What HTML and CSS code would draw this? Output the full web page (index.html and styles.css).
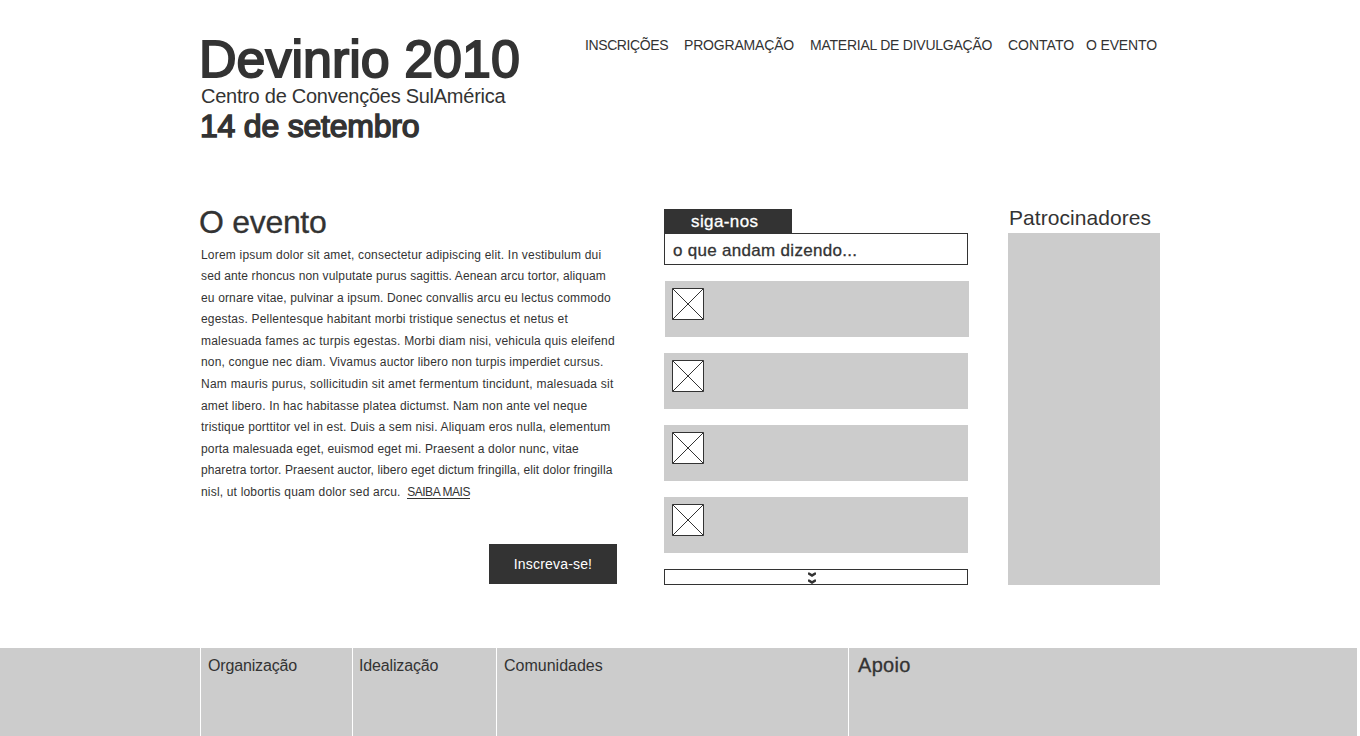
FILE: index.html
```html
<!DOCTYPE html>
<html lang="pt-BR">
<head>
<meta charset="utf-8">
<title>Devinrio 2010</title>
<link rel="stylesheet" href="styles.css">
</head>
<body>
<div class="page">
  <header class="header">
    <div class="brand">
      <h1 class="title">Devinrio 2010</h1>
      <p class="place">Centro de Convenções SulAmérica</p>
      <p class="date">14 de setembro</p>
    </div>
    <nav class="nav">
      <a class="n1">INSCRIÇÕES</a><a class="n2">PROGRAMAÇÃO</a><a class="n3">MATERIAL DE DIVULGAÇÃO</a><a class="n4">CONTATO</a><a class="n5">O EVENTO</a>
    </nav>
  </header>
  <main class="main">
    <section class="event">
      <h2 class="event-title">O evento</h2>
      <p class="event-text"><span class="loose">Lorem ipsum dolor sit amet, consectetur adipiscing elit. In vestibulum dui</span><br><span class="tight">sed ante rhoncus non vulputate purus sagittis. Aenean arcu tortor, aliquam</span><br><span class="snug">eu ornare vitae, pulvinar a ipsum. Donec convallis arcu eu lectus commodo</span><br><span class="loose">egestas. Pellentesque habitant morbi tristique senectus et netus et</span><br><span class="wide">malesuada fames ac turpis egestas. Morbi diam nisi, vehicula quis eleifend</span><br><span class="normal">non, congue nec diam. Vivamus auctor libero non turpis imperdiet cursus.</span><br><span class="wider">Nam mauris purus, sollicitudin sit amet fermentum tincidunt, malesuada sit</span><br><span class="normal">amet libero. In hac habitasse platea dictumst. Nam non ante vel neque</span><br><span class="medium">tristique porttitor vel in est. Duis a sem nisi. Aliquam eros nulla, elementum</span><br><span class="normal">porta malesuada eget, euismod eget mi. Praesent a dolor nunc, vitae</span><br><span class="tightest">pharetra tortor. Praesent auctor, libero eget dictum fringilla, elit dolor fringilla</span><br><span class="medium">nisl, ut lobortis quam dolor sed arcu. </span><a class="more">SAIBA MAIS</a></p>
      <a class="button">Inscreva-se!</a>
    </section>
    <section class="social">
      <h2 class="tab">siga-nos</h2>
      <div class="saying">o que andam dizendo...</div>
      <ul class="posts">
        <li class="post post-first"><svg class="avatar" viewBox="0 0 32 32"><path d="M.5.5h31v31H.5zM.5.5l31 31M31.5.5l-31 31"/></svg></li>
        <li class="post"><svg class="avatar" viewBox="0 0 32 32"><path d="M.5.5h31v31H.5zM.5.5l31 31M31.5.5l-31 31"/></svg></li>
        <li class="post"><svg class="avatar" viewBox="0 0 32 32"><path d="M.5.5h31v31H.5zM.5.5l31 31M31.5.5l-31 31"/></svg></li>
        <li class="post"><svg class="avatar" viewBox="0 0 32 32"><path d="M.5.5h31v31H.5zM.5.5l31 31M31.5.5l-31 31"/></svg></li>
      </ul>
      <div class="expand"><svg class="chevrons" viewBox="0 0 8 12"><path d="M0 .5h1.500L4 2l2.500-1.500H8V2.500L4 5 0 2.500zM0 7.500h1.500L4 9l2.500-1.500H8V9.500L4 12 0 9.500z"/></svg></div>
    </section>
    <aside class="sponsors">
      <h2 class="sponsors-title">Patrocinadores</h2>
      <div class="sponsors-box"></div>
    </aside>
  </main>
  <footer class="footer">
    <div class="col col-org">Organização</div>
    <div class="col col-idea">Idealização</div>
    <div class="col">Comunidades</div>
    <div class="col support">Apoio</div>
  </footer>
</div>
</body>
</html>
```
FILE: styles.css
```css
* { box-sizing: border-box; }
body {
  margin: 0;
  background: #fff;
  color: #333;
  font-family: "Liberation Sans", Arial, sans-serif;
  overflow: hidden;
}
h1, h2, p, ul { margin: 0; padding: 0; font-weight: 400; list-style: none; }
.page { width: 1360px; height: 736px; display: flex; flex-direction: column; }
.header { height: 209px; padding: 30px 0 0 199px; display: flex; }
.brand { width: 386px; padding-top: 6px; }
.title { font-size: 52px; line-height: 46px; -webkit-text-stroke: 1.9px #333; white-space: nowrap; }
.place { font-size: 20px; line-height: 24px; margin: 2px 0 0 2px; letter-spacing: -.26px; white-space: nowrap; }
.date { font-size: 32px; line-height: 36px; margin-left: 1px; letter-spacing: -.22px; -webkit-text-stroke: 1.5px #333; }
.nav { display: flex; padding-top: 7px; font-size: 14px; line-height: 16px; white-space: nowrap; }
.n1 { width: 99px; letter-spacing: -.4px; }
.n2 { width: 126px; letter-spacing: -.18px; }
.n3 { width: 198px; letter-spacing: -.24px; }
.n4 { width: 78px; }
.n5 { letter-spacing: -.15px; }
.main { height: 439px; display: flex; padding-left: 199px; }
.event { width: 465px; display: flex; flex-direction: column; }
.event-title { font-size: 32px; line-height: 36px; margin-top: -5px; letter-spacing: -.3px; -webkit-text-stroke: .3px #333; }
.event-text { height: 264px; font-size: 12px; line-height: 21.6px; padding: 4.5px 0 0 2px; white-space: nowrap; }
.tightest { letter-spacing: .11px; }
.tight { letter-spacing: .135px; }
.snug { letter-spacing: .15px; }
.normal { letter-spacing: .165px; }
.medium { letter-spacing: .18px; }
.loose { letter-spacing: .2px; }
.wide { letter-spacing: .22px; }
.wider { letter-spacing: .24px; }
.more { display: inline-block; margin-left: 3px; line-height: 12px; letter-spacing: -.45px; border-bottom: 1px solid #333; }
.button {
  width: 128px;
  height: 40px;
  margin: 40px 0 0 290px;
  background: #333;
  color: #fff;
  font-size: 14px;
  line-height: 40px;
  text-align: center;
  letter-spacing: .18px;
}
.social { width: 344px; }
.tab {
  width: 128px;
  height: 24px;
  padding-left: 27px;
  background: #333;
  color: #fff;
  font-size: 17px;
  line-height: 25px;
  letter-spacing: .4px;
  -webkit-text-stroke: .3px #fff;
}
.saying {
  width: 304px;
  height: 32px;
  padding-left: 8px;
  border: 1px solid #333;
  font-size: 17px;
  line-height: 33px;
  letter-spacing: .3px;
  -webkit-text-stroke: .3px #333;
}
.posts { display: grid; gap: 16px; padding: 16px 0; }
.post { width: 304px; height: 56px; padding: 7px 0 0 8px; background: #ccc; }
.post-first { margin-left: 1px; padding-left: 7px; }
.avatar { display: block; width: 32px; height: 32px; background: #fff; }
.avatar path { fill: none; stroke: #333; }
.expand { width: 304px; height: 16px; border: 1px solid #333; display: flex; justify-content: center; }
.chevrons { width: 8px; height: 12px; margin-top: 2px; margin-right: 8px; }
.chevrons path { fill: #333; }
.sponsors { width: 152px; }
.sponsors-title { height: 24px; padding-left: 1px; font-size: 21px; line-height: 18px; letter-spacing: .05px; }
.sponsors-box { height: 352px; background: #ccc; }
.footer { width: 1357px; height: 88px; padding-left: 200px; background: #ccc; display: grid; grid-template-columns: 152px 144px 352px 1fr; }
.col { border-left: 1px solid #fff; padding-left: 7px; font-size: 16px; line-height: 35px; }
.col-org { letter-spacing: -.15px; }
.col-idea { padding-left: 6px; letter-spacing: -.15px; }
.support { padding-left: 9px; font-size: 20px; line-height: 34px; letter-spacing: .3px; -webkit-text-stroke: .3px #333; }
```
